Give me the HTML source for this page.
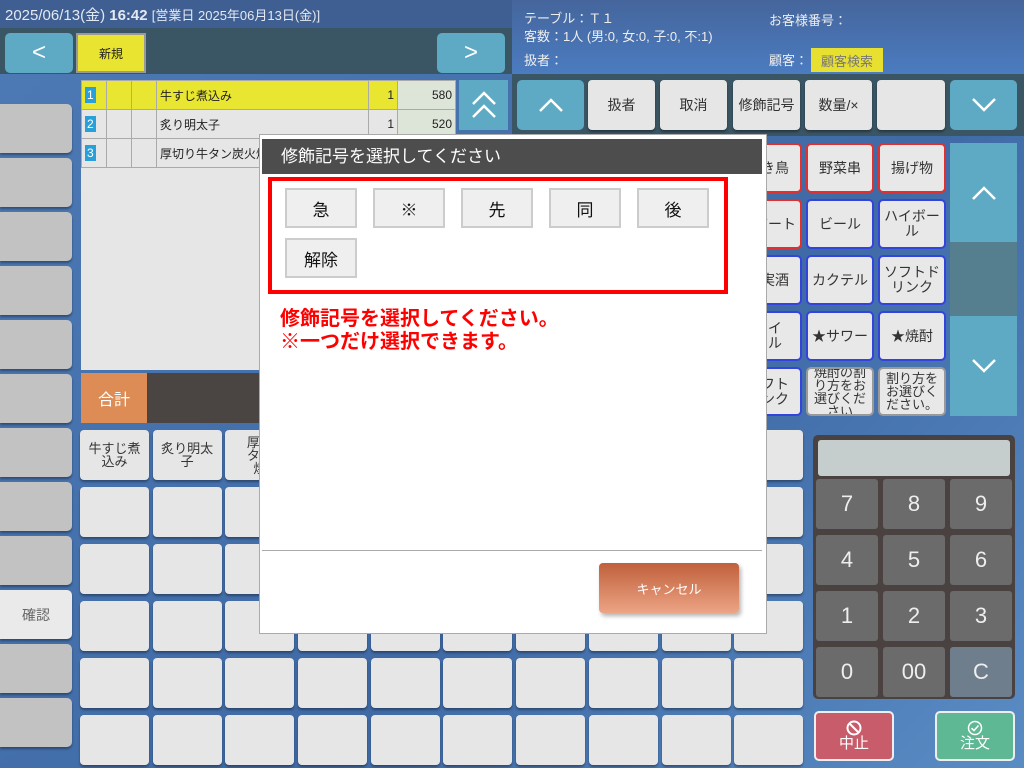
<!DOCTYPE html>
<html><head><meta charset="utf-8"><style>
*{box-sizing:border-box;margin:0;padding:0}
body{width:1024px;height:768px;overflow:hidden;position:relative;background:linear-gradient(135deg,#4d7ab5,#3f6aa6 60%,#5a8cc4);font-family:"Liberation Sans","Noto Sans CJK JP",sans-serif}
.a{position:absolute}
.c{display:flex;align-items:center;justify-content:center;text-align:center}
.g{background:#e6e6e6;border-radius:4px;box-shadow:0 2px 2px rgba(0,0,0,.35);color:#333;font-size:13px;line-height:13px}
.sb{background:#c2c2c2;border-radius:0 5px 5px 0;box-shadow:0 2px 2px rgba(0,0,0,.35)}
.t{background:#5eaac4;border-radius:5px;color:#fff}
.cat{background:#e8e8e8;border:2px solid #3344dd;border-radius:5px;font-size:14px;color:#333;line-height:15px}
.k{background:#6b6b6b;border-radius:3px;color:#eee;font-size:22px}
.mb{background:#efefef;border:2px solid #ccc;font-size:17px;color:#111}
td{border:1px solid #aaa;font-size:12px;color:#222;height:29px;padding:0 3px}
</style></head><body>
<div class="a" style="left:0;top:0;width:512px;height:28px;background:#3f5f92"></div>
<div class="a" style="left:5px;top:4px;color:#e4e8f0;font-size:15px;white-space:nowrap">2025/06/13(金) <b>16:42</b> <span style="font-size:13px">[営業日 2025年06月13日(金)]</span></div>
<div class="a" style="left:512px;top:0;width:512px;height:74px;background:linear-gradient(#45659c,#4b7cc0)"></div>
<div class="a" style="left:524px;top:10px;color:#eee;font-size:13px;line-height:18px">テーブル：Ｔ１<br>客数：1人 (男:0, 女:0, 子:0, 不:1)</div>
<div class="a" style="left:524px;top:50px;color:#eee;font-size:13px">扱者：</div>
<div class="a" style="left:769px;top:10px;color:#eee;font-size:13px">お客様番号：</div>
<div class="a" style="left:769px;top:50px;color:#eee;font-size:13px">顧客：</div>
<div class="a c" style="left:811px;top:48px;width:72px;height:24px;background:#e8e030;color:#777;font-size:13px">顧客検索</div>
<div class="a" style="left:0;top:28px;width:512px;height:46px;background:#3a5563"></div>
<div class="a t c" style="left:5px;top:33px;width:68px;height:40px;font-size:24px">&lt;</div>
<div class="a c" style="left:76px;top:33px;width:70px;height:40px;background:#e8e430;border:2px solid #999;font-size:12px;color:#222">新規</div>
<div class="a t c" style="left:437px;top:33px;width:68px;height:40px;font-size:24px">&gt;</div>
<div class="a" style="left:512px;top:74px;width:512px;height:62px;background:#3a5563"></div>

<!-- sidebar -->
<div class="a sb" style="left:0;top:104px;width:72px;height:49px"></div>
<div class="a sb" style="left:0;top:158px;width:72px;height:49px"></div>
<div class="a sb" style="left:0;top:212px;width:72px;height:49px"></div>
<div class="a sb" style="left:0;top:266px;width:72px;height:49px"></div>
<div class="a sb" style="left:0;top:320px;width:72px;height:49px"></div>
<div class="a sb" style="left:0;top:374px;width:72px;height:49px"></div>
<div class="a sb" style="left:0;top:428px;width:72px;height:49px"></div>
<div class="a sb" style="left:0;top:482px;width:72px;height:49px"></div>
<div class="a sb" style="left:0;top:536px;width:72px;height:49px"></div>
<div class="a sb c" style="left:0;top:590px;width:72px;height:49px;background:#eaeaea;color:#666;font-size:14px">確認</div>
<div class="a sb" style="left:0;top:644px;width:72px;height:49px"></div>
<div class="a sb" style="left:0;top:698px;width:72px;height:49px"></div>

<!-- order table -->
<div class="a" style="left:81px;top:80px;width:375px;height:290px;background:#e6e6e6"></div>
<table class="a" style="left:81px;top:80px;width:375px;border-collapse:collapse">
<tr style="background:#e8e630"><td style="width:25px"><span style="background:#2aa0d8;color:#fff;padding:1px 2px">1</span></td><td style="width:25px"></td><td style="width:25px"></td><td>牛すじ煮込み</td><td style="width:29px;text-align:right">1</td><td style="width:58px;text-align:right;background:#dde4d8">580</td></tr>
<tr><td><span style="background:#2aa0d8;color:#fff;padding:1px 2px">2</span></td><td></td><td></td><td>炙り明太子</td><td style="text-align:right">1</td><td style="text-align:right;background:#dde4d8">520</td></tr>
<tr><td><span style="background:#2aa0d8;color:#fff;padding:1px 2px">3</span></td><td></td><td></td><td>厚切り牛タン炭火焼</td><td style="text-align:right">1</td><td style="text-align:right;background:#dde4d8"></td></tr>
</table>
<div class="a t c" style="left:459px;top:80px;width:49px;height:50px;border-radius:0"><svg width="26" height="30" viewBox="0 0 26 30"><path d="M2 14L13 3L24 14M2 27L13 16L24 27" fill="none" stroke="#fff" stroke-width="2.5"/></svg></div>
<div class="a c" style="left:81px;top:373px;width:66px;height:50px;background:#dc8c54;color:#fff;font-size:16px">合計</div>
<div class="a" style="left:147px;top:373px;width:115px;height:50px;background:#4a4442"></div>

<!-- menu grid -->
<div class="a" style="left:80px;top:430px;width:722px;height:336px;display:grid;grid-template-columns:repeat(10,69px);grid-template-rows:repeat(6,50px);column-gap:3.7px;row-gap:7px">
<div class="g c">牛すじ煮<br>込み</div><div class="g c">炙り明太<br>子</div><div class="g c">厚切<br>タン<br>焼</div><div class="g"></div><div class="g"></div><div class="g"></div><div class="g"></div><div class="g"></div><div class="g"></div><div class="g"></div>
<div class="g"></div><div class="g"></div><div class="g"></div><div class="g"></div><div class="g"></div><div class="g"></div><div class="g"></div><div class="g"></div><div class="g"></div><div class="g"></div>
<div class="g"></div><div class="g"></div><div class="g"></div><div class="g"></div><div class="g"></div><div class="g"></div><div class="g"></div><div class="g"></div><div class="g"></div><div class="g"></div>
<div class="g"></div><div class="g"></div><div class="g"></div><div class="g"></div><div class="g"></div><div class="g"></div><div class="g"></div><div class="g"></div><div class="g"></div><div class="g"></div>
<div class="g"></div><div class="g"></div><div class="g"></div><div class="g"></div><div class="g"></div><div class="g"></div><div class="g"></div><div class="g"></div><div class="g"></div><div class="g"></div>
<div class="g"></div><div class="g"></div><div class="g"></div><div class="g"></div><div class="g"></div><div class="g"></div><div class="g"></div><div class="g"></div><div class="g"></div><div class="g"></div>
</div>

<!-- top right buttons -->
<div class="a t c" style="left:517px;top:80px;width:67px;height:50px"><svg width="26" height="16" viewBox="0 0 26 16"><path d="M2 14L13 3L24 14" fill="none" stroke="#fff" stroke-width="2.5"/></svg></div>
<div class="a g c" style="left:588px;top:80px;width:67px;height:50px;font-size:14px">扱者</div>
<div class="a g c" style="left:660px;top:80px;width:67px;height:50px;font-size:14px">取消</div>
<div class="a g c" style="left:733px;top:80px;width:67px;height:50px;font-size:14px">修飾記号</div>
<div class="a g c" style="left:805px;top:80px;width:67px;height:50px;font-size:14px">数量/×</div>
<div class="a g" style="left:877px;top:80px;width:68px;height:50px"></div>
<div class="a t c" style="left:950px;top:80px;width:67px;height:50px"><svg width="26" height="16" viewBox="0 0 26 16"><path d="M2 2L13 13L24 2" fill="none" stroke="#fff" stroke-width="2.5"/></svg></div>

<!-- categories -->
<div class="a cat c" style="left:734px;top:143px;width:68px;height:50px;border-color:#e03030">焼き鳥</div>
<div class="a cat c" style="left:806px;top:143px;width:68px;height:50px;border-color:#e03030">野菜串</div>
<div class="a cat c" style="left:878px;top:143px;width:68px;height:50px;border-color:#e03030">揚げ物</div>
<div class="a cat c" style="left:734px;top:199px;width:68px;height:50px;border-color:#e03030">デザート</div>
<div class="a cat c" style="left:806px;top:199px;width:68px;height:50px">ビール</div>
<div class="a cat c" style="left:878px;top:199px;width:68px;height:50px">ハイボー<br>ル</div>
<div class="a cat c" style="left:734px;top:255px;width:68px;height:50px">果実酒</div>
<div class="a cat c" style="left:806px;top:255px;width:68px;height:50px">カクテル</div>
<div class="a cat c" style="left:878px;top:255px;width:68px;height:50px">ソフトド<br>リンク</div>
<div class="a cat c" style="left:734px;top:311px;width:68px;height:50px">ハイ<br>ール</div>
<div class="a cat c" style="left:806px;top:311px;width:68px;height:50px">★サワー</div>
<div class="a cat c" style="left:878px;top:311px;width:68px;height:50px">★焼酎</div>
<div class="a cat c" style="left:734px;top:367px;width:68px;height:49px">ソフト<br>リンク</div>
<div class="a cat c" style="left:806px;top:367px;width:68px;height:49px;border-color:#999;font-size:13px;overflow:hidden;line-height:13px">焼酎の割<br>り方をお<br>選びくだ<br>さい</div>
<div class="a cat c" style="left:878px;top:367px;width:68px;height:49px;border-color:#999;font-size:13px;line-height:13px">割り方を<br>お選びく<br>ださい。</div>
<div class="a c" style="left:950px;top:143px;width:67px;height:99px;background:#5eaac4"><svg width="26" height="16" viewBox="0 0 26 16"><path d="M2 14L13 3L24 14" fill="none" stroke="#fff" stroke-width="2.5"/></svg></div>
<div class="a" style="left:950px;top:242px;width:67px;height:74px;background:#557f8e"></div>
<div class="a c" style="left:950px;top:316px;width:67px;height:100px;background:#5eaac4"><svg width="26" height="16" viewBox="0 0 26 16"><path d="M2 2L13 13L24 2" fill="none" stroke="#fff" stroke-width="2.5"/></svg></div>

<!-- numpad -->
<div class="a" style="left:813px;top:435px;width:202px;height:264px;background:#4a4240;border-radius:5px"></div>
<div class="a" style="left:818px;top:440px;width:192px;height:36px;background:#c5cecc;border-radius:3px"></div>
<div class="a k c" style="left:816px;top:479px;width:62px;height:50px">7</div>
<div class="a k c" style="left:883px;top:479px;width:62px;height:50px">8</div>
<div class="a k c" style="left:950px;top:479px;width:62px;height:50px">9</div>
<div class="a k c" style="left:816px;top:535px;width:62px;height:50px">4</div>
<div class="a k c" style="left:883px;top:535px;width:62px;height:50px">5</div>
<div class="a k c" style="left:950px;top:535px;width:62px;height:50px">6</div>
<div class="a k c" style="left:816px;top:591px;width:62px;height:50px">1</div>
<div class="a k c" style="left:883px;top:591px;width:62px;height:50px">2</div>
<div class="a k c" style="left:950px;top:591px;width:62px;height:50px">3</div>
<div class="a k c" style="left:816px;top:647px;width:62px;height:50px">0</div>
<div class="a k c" style="left:883px;top:647px;width:62px;height:50px">00</div>
<div class="a k c" style="left:950px;top:647px;width:62px;height:50px;background:#6e7e8c">C</div>
<div class="a c" style="left:814px;top:711px;width:80px;height:50px;background:#c85c6a;border:2px solid #eee;border-radius:5px;color:#fff;font-size:15px;flex-direction:column;line-height:16px"><svg width="16" height="16" viewBox="0 0 16 16"><circle cx="8" cy="8" r="6.5" fill="none" stroke="#fff" stroke-width="2"/><path d="M3.5 3.5L12.5 12.5" stroke="#fff" stroke-width="2"/></svg>中止</div>
<div class="a c" style="left:935px;top:711px;width:80px;height:50px;background:#5fb894;border:2px solid #eee;border-radius:5px;color:#fff;font-size:15px;flex-direction:column;line-height:16px"><svg width="16" height="16" viewBox="0 0 16 16"><circle cx="8" cy="8" r="6.5" fill="none" stroke="#fff" stroke-width="1.5"/><path d="M4.5 8.2L7 10.5L11.5 5.5" fill="none" stroke="#fff" stroke-width="1.6"/></svg>注文</div>

<!-- modal -->
<div class="a" style="left:259px;top:134px;width:508px;height:500px;background:#fff;border:1px solid #aaa"></div>
<div class="a" style="left:262px;top:139px;width:500px;height:35px;background:#4d4d4d;color:#fff;font-size:17px;line-height:35px;padding-left:19px">修飾記号を選択してください</div>
<div class="a" style="left:268px;top:177px;width:460px;height:117px;border:4px solid #f00"></div>
<div class="a mb c" style="left:285px;top:188px;width:72px;height:40px">急</div>
<div class="a mb c" style="left:373px;top:188px;width:72px;height:40px">※</div>
<div class="a mb c" style="left:461px;top:188px;width:72px;height:40px">先</div>
<div class="a mb c" style="left:549px;top:188px;width:72px;height:40px">同</div>
<div class="a mb c" style="left:637px;top:188px;width:72px;height:40px">後</div>
<div class="a mb c" style="left:285px;top:238px;width:72px;height:40px">解除</div>
<div class="a" style="left:280px;top:308px;color:#f00;font-size:20px;font-weight:bold;line-height:23px;white-space:nowrap">修飾記号を選択してください。<br>※一つだけ選択できます。</div>
<div class="a" style="left:262px;top:550px;width:500px;height:1px;background:#aaa"></div>
<div class="a c" style="left:599px;top:563px;width:140px;height:50px;background:linear-gradient(#c0603c,#eca484);border-radius:4px;color:#fff;font-size:13px;box-shadow:2px 3px 4px rgba(0,0,0,.3)">キャンセル</div>
</body></html>
